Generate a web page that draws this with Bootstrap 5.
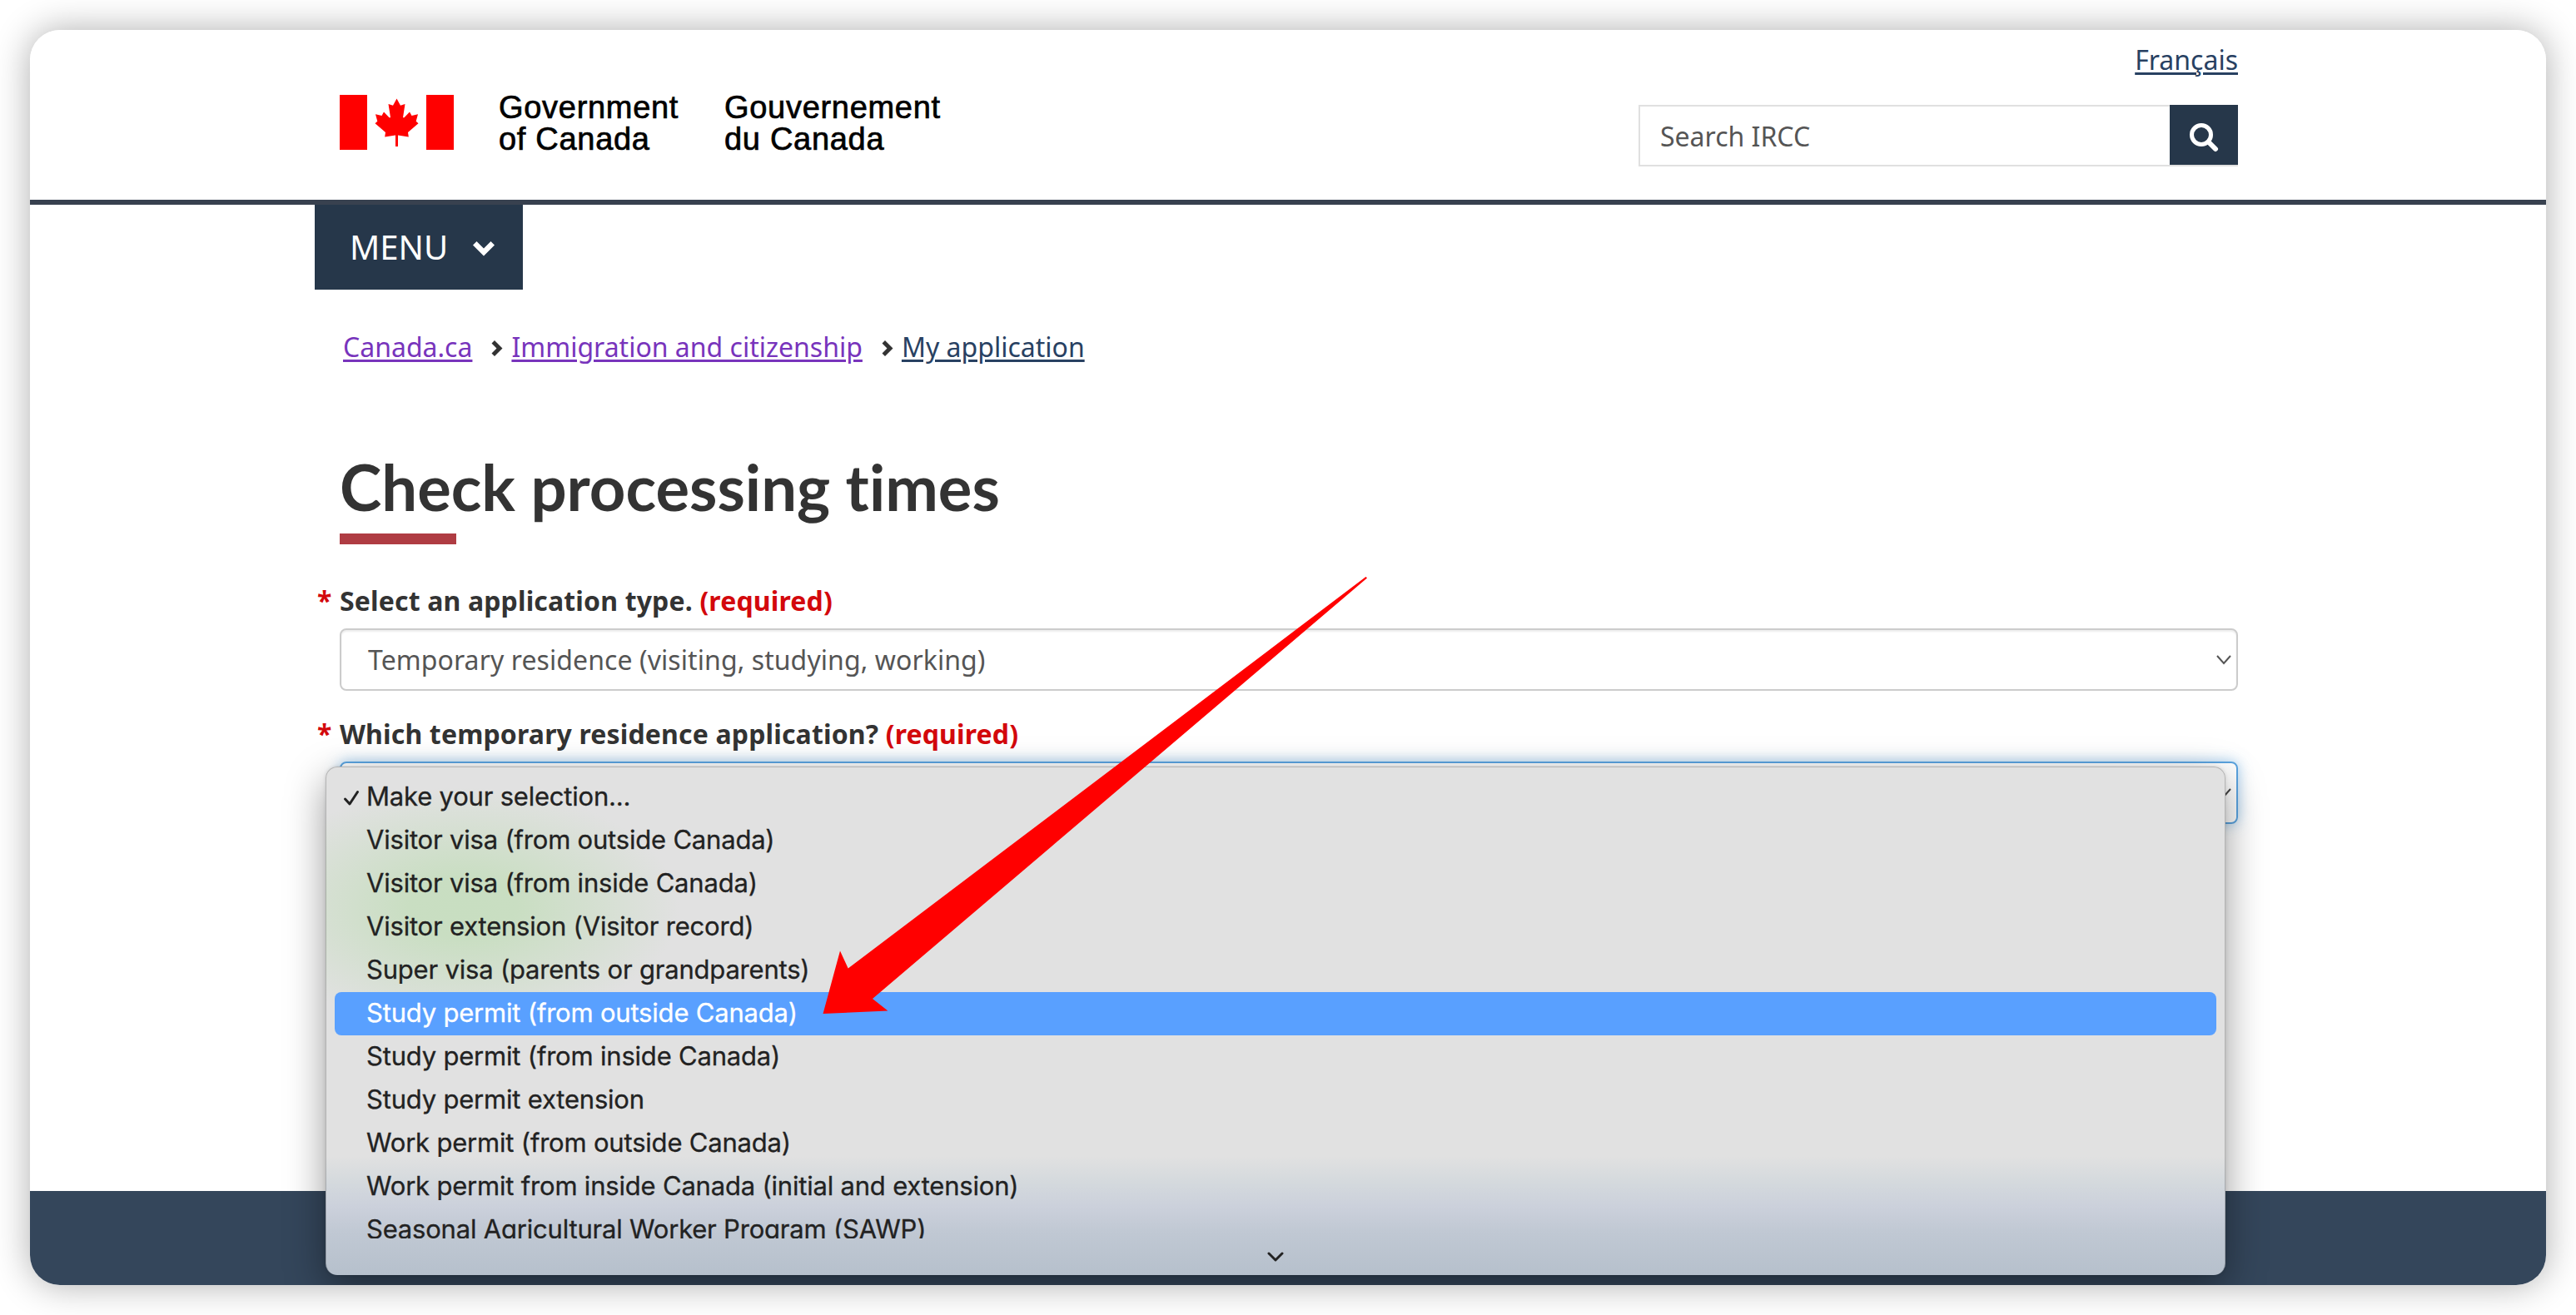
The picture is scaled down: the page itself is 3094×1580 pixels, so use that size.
<!DOCTYPE html>
<html lang="en">
<head>
    <meta charset="UTF-8">
    <meta name="viewport" content="width=device-width, initial-scale=1.0">
    <title>Check processing times</title>
    <link href="https://cdn.jsdelivr.net/npm/bootstrap@5.3.0/dist/css/bootstrap.min.css" rel="stylesheet">
    <style>
        body { height: 1580px; padding: 36px; overflow: hidden; background: #fff; color: #333; font-family: "Noto Sans", sans-serif; font-size: 32px; line-height: 40px; }
        .page-window { height: 1508px; border-radius: 36px; overflow: hidden; background: #fff; }
        .window-shadow { border-radius: 36px; box-shadow: 0 0 44px rgba(0, 0, 0, .32); }
        .page-inner { width: 2280px; margin-left: 372px; }
        .site-header { height: 210px; border-bottom: 6px solid #38414f; }
        .brand { padding-top: 74px; }
        .flag { width: 137px; height: 66px; margin-top: 4px; margin-right: 54px; }
        .brand-text { font-family: "Liberation Sans", Arial, sans-serif; font-size: 38px; line-height: 38px; color: #000; letter-spacing: .7px; -webkit-text-stroke: .7px #000; white-space: nowrap; width: 271px; }
        .header-tools { width: 720px; padding-top: 16px; }
        a, a:hover { color: #284162; text-decoration: underline; text-decoration-thickness: 3px; text-underline-offset: 3px; }
        a.visited { color: #7834bc; }
        .search-row { height: 74px; margin-top: 34px; border: 2px solid #e0e0e0; border-right: 0; }
        .search-row .form-control { height: 70px; padding: 0 24px; border: 0; border-radius: 0; font-size: 32px; color: #555; }
        .search-row .form-control::placeholder { color: #555; opacity: 1; }
        .search-btn { width: 82px; height: 72px; margin-top: -2px; padding: 5px 0 0; border: 0; border-radius: 0; background: #26374a; }
        .menu-btn { width: 250px; height: 102px; margin-left: -30px; padding: 0 34px 0 42px; border: 0; border-radius: 0; background: #26374a; color: #fff; font-size: 40px; }
        .menu-btn:hover { background: #26374a; color: #fff; }
        .crumbs { margin-top: 49px; padding-left: 4px; }
        .crumb-arrow { width: 14px; height: 19px; margin: 2px 10px 0 23px; }
        .page-title { margin: 98px 0 0; font-family: Lato, sans-serif; font-weight: 700; font-size: 76px; line-height: 100px; color: #333; white-space: nowrap; font-variant-ligatures: none; }
        .title-bar { width: 140px; height: 13px; margin-top: 6px; background: #af3c43; }
        .field-label { display: block; font-weight: 700; white-space: nowrap; letter-spacing: .15px; }
        .field-label.first { margin-top: 48px; }
        .field-label.second { margin-top: 32px; }
        .field-label .star { display: inline-block; width: 27px; margin-left: -27px; }
        .required-text { color: #d3080c; }
        .field-box { height: 75px; margin-top: 13px; padding: 0 6px 0 32px; border: 2px solid #ccc; border-radius: 8px; box-shadow: inset 0 2px 2px rgba(0, 0, 0, .075); color: #555; letter-spacing: .08px; }
        .field-box.focused { border-color: #5ba4e0; box-shadow: 0 0 16px rgba(102, 175, 233, .6); }
        .site-footer { height: 113px; background: #34465b; }
        .options-menu { left: 355px; top: 885px; width: 2282px; height: 611px; padding: 10px; border: 1px solid rgba(0, 0, 0, .2); border-bottom: 0; border-radius: 14px; color: #222; font-family: Inter, sans-serif; font-size: 31px; letter-spacing: -.2px; -webkit-text-stroke: .3px;
            background: radial-gradient(ellipse 260px 145px at 165px 170px, #c8dec1 0, #c9dec2 25%, rgba(225, 225, 225, 0) 100%), linear-gradient(#e1e1e1 0, #e1e1e1 468px, #d4d9dd 500px, #cbd0db 530px, #c0c8d3 560px, #b6c0cc 611px);
            background-clip: border-box; background-origin: border-box;
            box-shadow: 0 16px 48px rgba(0, 0, 0, .4), 0 0 4px rgba(0, 0, 0, .12); }
        .options-list { height: 556px; overflow: hidden; margin: 0; }
        .options-list li { height: 52px; line-height: 50px; padding-left: 10px; border-radius: 8px; white-space: nowrap; }
        .options-list li.selected { background: #59a0ff; color: #fff; }
        .tick { width: 28px; height: 52px; }
        .pointer-arrow { left: 988px; top: 692px; width: 656px; height: 528px; }
    </style>
</head>
<body>
<div class="window-shadow">
<div class="page-window d-flex flex-column position-relative">
    <header class="site-header">
        <div class="page-inner d-flex justify-content-between">
            <div class="brand d-flex align-items-start">
                <svg class="flag" viewBox="0 0 137 66">
                    <path fill="#f00" d="M0 0h33v66H0zM104 0h33v66h-33z"/>
                    <path fill="#f00" d="M68.500 4.500 64 12.700 58.500 11 61 27.300H59.500L53 20.500 50.500 25 43 23.300 45.300 31.800 42.500 34.200 55 45 54.200 50.500 67 48.500V62H70V48.500L82.800 50.500 82 45 94.500 34.200 91.700 31.800 94 23.300 86.500 25 84 20.500 77.500 27.300H76L78.500 11 73 12.700z"/>
                </svg>
                <div class="brand-text">Government<br>of Canada</div>
                <div class="brand-text">Gouvernement<br>du Canada</div>
            </div>
            <div class="header-tools">
                <div class="text-end"><a href="#">Français</a></div>
                <div class="search-row d-flex">
                    <input type="text" class="form-control" placeholder="Search IRCC">
                    <button class="btn search-btn flex-shrink-0 d-flex align-items-center justify-content-center">
                        <svg width="36" height="36" viewBox="0 0 36 36" fill="none" stroke="#fff">
                            <circle cx="15" cy="15" r="11.500" stroke-width="5"/>
                            <path d="M23.500 23.500 32 32" stroke-width="6" stroke-linecap="round"/>
                        </svg>
                    </button>
                </div>
            </div>
        </div>
    </header>

    <main class="page-inner flex-grow-1">
        <button class="btn menu-btn d-flex align-items-center justify-content-between">
            <span>MENU</span>
            <svg class="mt-1" width="26" height="18" viewBox="0 0 26 18"><path fill="#fff" d="M4.500 0 13 8.500 21.500 0 26 4.500 13 17.500 0 4.500z"/></svg>
        </button>

        <nav class="crumbs d-flex align-items-center">
            <a class="visited" href="#">Canada.ca</a>
            <svg class="crumb-arrow" viewBox="0 0 14 19"><path fill="#333" d="M4 0 13.500 9.500 4 19 .5 15.500 6.500 9.500 .5 3.500z"/></svg>
            <a class="visited" href="#">Immigration and citizenship</a>
            <svg class="crumb-arrow" viewBox="0 0 14 19"><path fill="#333" d="M4 0 13.500 9.500 4 19 .5 15.500 6.500 9.500 .5 3.500z"/></svg>
            <a href="#">My application</a>
        </nav>

        <h1 class="page-title">Check processing times</h1>
        <div class="title-bar"></div>

        <label class="field-label first"><span class="star required-text">*</span>Select an application type. <span class="required-text">(required)</span></label>
        <div class="field-box d-flex align-items-center justify-content-between">
            <span>Temporary residence (visiting, studying, working)</span>
            <svg width="18" height="12" viewBox="0 0 18 12"><path fill="none" stroke="#555" stroke-width="2" d="M1 1 9 10 17 1"/></svg>
        </div>

        <label class="field-label second"><span class="star required-text">*</span>Which temporary residence application? <span class="required-text">(required)</span></label>
        <div class="field-box focused d-flex align-items-center justify-content-end">
            <svg width="18" height="12" viewBox="0 0 18 12"><path fill="none" stroke="#444" stroke-width="2" d="M1 1 9 10 17 1"/></svg>
        </div>
    </main>

    <footer class="site-footer flex-shrink-0"></footer>

    <!-- open dropdown of the second select -->
    <div class="options-menu position-absolute">
        <ul class="options-list list-unstyled">
            <li class="d-flex"><svg class="tick" viewBox="0 0 28 52"><path fill="none" stroke="#222" stroke-width="3" stroke-linecap="round" stroke-linejoin="round" d="M2.500 28 8 34 17.500 19.500"/></svg>Make your selection...</li>
            <li><span class="ps-4 ms-1">Visitor visa (from outside Canada)</span></li>
            <li><span class="ps-4 ms-1">Visitor visa (from inside Canada)</span></li>
            <li><span class="ps-4 ms-1">Visitor extension (Visitor record)</span></li>
            <li><span class="ps-4 ms-1">Super visa (parents or grandparents)</span></li>
            <li class="selected"><span class="ps-4 ms-1">Study permit (from outside Canada)</span></li>
            <li><span class="ps-4 ms-1">Study permit (from inside Canada)</span></li>
            <li><span class="ps-4 ms-1">Study permit extension</span></li>
            <li><span class="ps-4 ms-1">Work permit (from outside Canada)</span></li>
            <li><span class="ps-4 ms-1">Work permit from inside Canada (initial and extension)</span></li>
            <li><span class="ps-4 ms-1">Seasonal Agricultural Worker Program (SAWP)</span></li>
        </ul>
        <div class="d-flex justify-content-center pt-3">
            <svg width="20" height="12" viewBox="0 0 20 12"><path fill="none" stroke="#222" stroke-width="3" stroke-linecap="round" stroke-linejoin="round" d="M2 2 10 10 18 2"/></svg>
        </div>
    </div>
</div>
</div>

<svg class="pointer-arrow position-absolute" viewBox="988 692 656 528">
    <path fill="#f00" d="M988.500 1218 1009 1142.500 1018.700 1163.600 1640.500 693 1642 694.500 1048 1200 1066.400 1214.400z"/>
</svg>
<script src="https://cdn.jsdelivr.net/npm/bootstrap@5.3.0/dist/js/bootstrap.bundle.min.js"></script>
</body>
</html>
